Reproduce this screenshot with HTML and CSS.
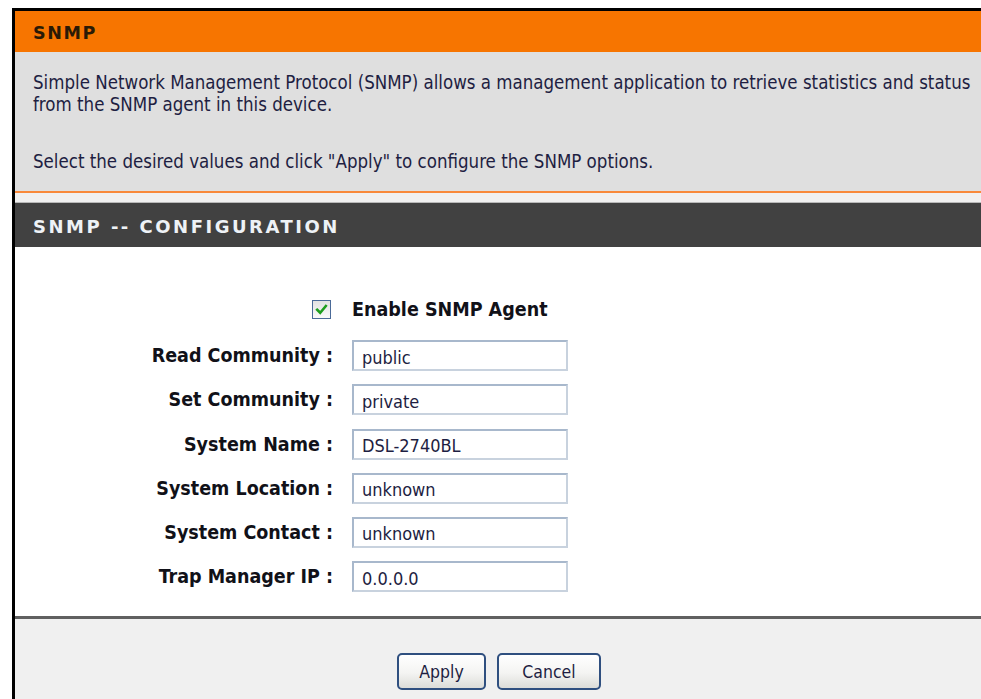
FILE: index.html
```html
<!DOCTYPE html>
<html lang="en">
<head>
<meta charset="utf-8">
<title>SNMP</title>
<link rel="stylesheet" href="styles.css">
</head>
<body>
<div class="frame">
  <div class="title-bar">SNMP</div>
  <div class="intro">
    <p>Simple Network Management Protocol (SNMP) allows a management application to retrieve statistics and status from the SNMP agent in this device.</p>
    <p>Select the desired values and click "Apply" to configure the SNMP options.</p>
  </div>
  <div class="spacer"></div>
  <div class="section-head">SNMP -- CONFIGURATION</div>
  <form class="config">
    <div class="grid">
      <div class="label check-cell">
        <span class="checkbox" role="checkbox" aria-checked="true">
          <svg viewBox="0 0 12 12" width="13" height="13"><path d="M2 6.2 L4.8 9 L10 2.8" fill="none" stroke="#1e9e1e" stroke-width="2.4" stroke-linecap="square"/></svg>
        </span>
      </div>
      <div class="check-text">Enable SNMP Agent</div>

      <label class="label">Read Community :</label>
      <div class="field">public</div>

      <label class="label">Set Community :</label>
      <div class="field">private</div>

      <label class="label">System Name :</label>
      <div class="field">DSL-2740BL</div>

      <label class="label">System Location :</label>
      <div class="field">unknown</div>

      <label class="label">System Contact :</label>
      <div class="field">unknown</div>

      <label class="label">Trap Manager IP :</label>
      <div class="field">0.0.0.0</div>
    </div>
  </form>
  <div class="footer">
    <button type="button" class="btn btn-apply">Apply</button>
    <button type="button" class="btn btn-cancel">Cancel</button>
  </div>
</div>
</body>
</html>
```

FILE: styles.css
```css
html, body {
  margin: 0;
  padding: 0;
  background: #ffffff;
  overflow: hidden;
  height: 699px;
}

body {
  font-family: "DejaVu Sans Condensed", "DejaVu Sans", sans-serif;
  color: #1c1c3c;
}

.frame {
  margin: 8px 0 0 12px;
  width: 1010px;
  border-left: 3px solid #000;
  border-top: 3px solid #000;
}

.title-bar {
  height: 41px;
  line-height: 44px;
  background: #f77500;
  padding-left: 18px;
  font-family: "DejaVu Sans", sans-serif;
  font-weight: bold;
  font-size: 17.5px;
  letter-spacing: 1.6px;
  color: #2a1a06;
}

.intro {
  background: #dfdfdf;
  height: 141px;
  box-sizing: border-box;
  padding: 20px 0 0 18px;
  border-bottom: 2px solid #f8893a;
  font-size: 18.55px;
  line-height: 22px;
  color: #1e1e42;
}

.intro p {
  margin: 0 0 35px 0;
  width: 950px;
}

.spacer {
  height: 9px;
  background: #f0f0f0;
  border-bottom: 1px solid #b8b8b8;
}

.section-head {
  height: 44px;
  line-height: 47px;
  background: #414141;
  padding-left: 18px;
  font-family: "DejaVu Sans", sans-serif;
  font-weight: bold;
  font-size: 18px;
  letter-spacing: 2.5px;
  color: #eef2f6;
}

.config {
  margin: 0;
  background: #ffffff;
  padding: 47px 0 24px 0;
}

.grid {
  display: grid;
  grid-template-columns: 318px 216px;
  grid-template-rows: 33px;
  grid-auto-rows: 31px;
  column-gap: 19px;
  row-gap: 13.2px;
}

.label {
  display: flex;
  align-items: center;
  justify-content: flex-end;
  font-weight: bold;
  font-size: 19.5px;
  color: #111118;
}

.check-cell {
  padding-right: 2px;
  align-self: start;
  height: 31px;
}

.checkbox {
  box-sizing: border-box;
  width: 19px;
  height: 19px;
  border: 1px solid #4a6a98;
  background: linear-gradient(#e2e2e2, #fafafa);
  display: flex;
  align-items: center;
  justify-content: center;
}

.check-text {
  display: flex;
  align-items: center;
  align-self: start;
  height: 31px;
  font-weight: bold;
  font-size: 19.5px;
  color: #111118;
}

.field {
  box-sizing: border-box;
  border: 2px solid #a8b8cc;
  border-right-color: #c8d2de;
  border-bottom-color: #c8d2de;
  background: #fff;
  padding: 3px 0 0 8px;
  display: flex;
  align-items: center;
  font-size: 18px;
  color: #1e1e42;
}

.footer {
  border-top: 3px solid #606060;
  background: #f0f0f0;
  height: 90px;
  padding-top: 34px;
  box-sizing: border-box;
  padding-left: 382px;
  display: flex;
  gap: 11px;
  align-items: flex-start;
}

.btn {
  height: 37px;
  border: 2px solid #2f4f7f;
  border-radius: 5px;
  background: linear-gradient(#ffffff 0%, #f4f4f2 55%, #dcdcd8 100%);
  font-family: "DejaVu Sans Condensed", "DejaVu Sans", sans-serif;
  font-size: 17.5px;
  color: #1e1e42;
  padding: 0;
}

.btn-apply {
  width: 89px;
}

.btn-cancel {
  width: 104px;
}
```
